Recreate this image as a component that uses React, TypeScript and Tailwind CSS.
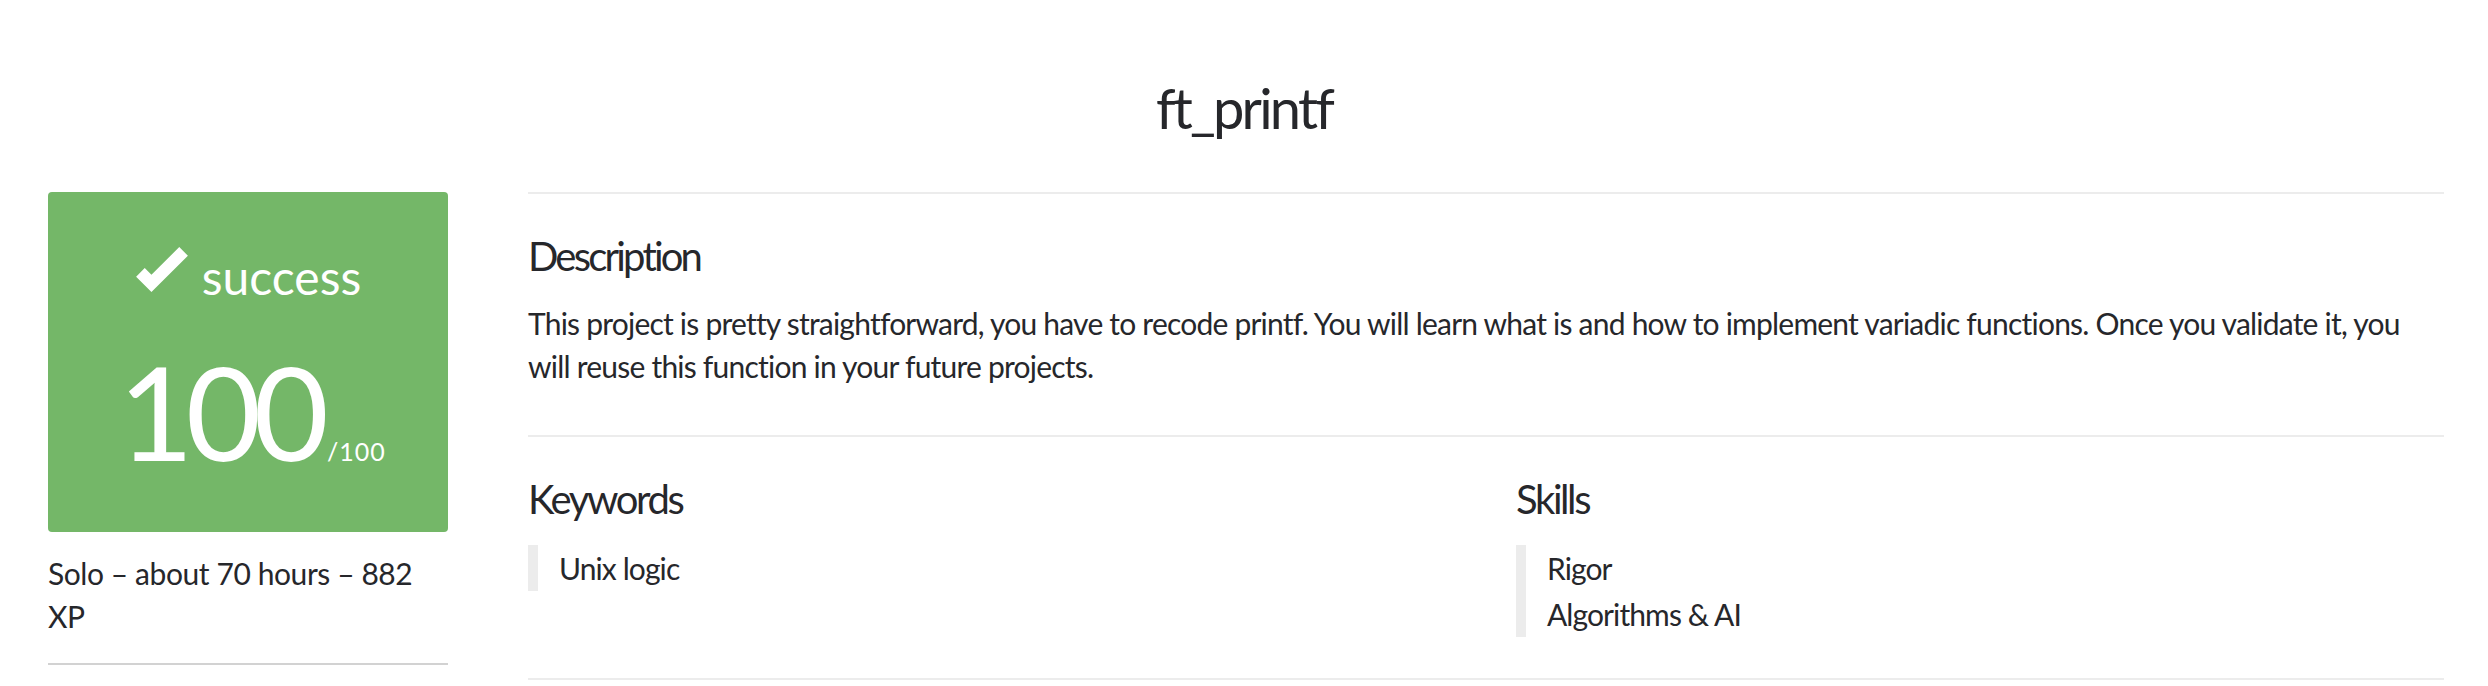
export default function App() {
  return (
    <div className="min-h-screen bg-white font-['Lato','Liberation_Sans',sans-serif] text-[#26272b]">
      {/* Project title */}
      <h1 className="h-[192px] pt-[80px] text-center text-[56px] leading-none tracking-[-0.05em]">ft_printf</h1>

      <div className="flex pl-[48px]">
        {/* Left: result card */}
        <div className="w-[400px] shrink-0">
          <div className="flex h-[340px] flex-col items-center rounded-[4px] bg-[#74b768] pt-[61px] text-white">
            <div className="flex h-[48px] items-center">
              <svg viewBox="0 -2 54 49" className="mb-[14px] mr-[13px] h-[47px] w-[54px]" fill="currentColor">
                <polygon points="0,29 9,20 16,27 45,-2 54,7 16,45" />
              </svg>
              <span className="text-[48px] leading-none">success</span>
            </div>
            <div className="mt-[45px] flex items-baseline pl-[8px]">
              <span className="text-[130px] leading-none tracking-[-0.06em]">100</span>
              <span className="ml-[6px] text-[25px] leading-none tracking-[0.04em]">/100</span>
            </div>
          </div>
          <p className="pr-[20px] pt-[20px] text-[30px] leading-[43px] tracking-[-0.014em]">
            Solo – about 70 hours – 882 XP
          </p>
          <div className="mt-[25px] border-t-2 border-[#d2d2d2]" />
        </div>

        {/* Right: project details */}
        <div className="ml-[80px] w-[1916px] shrink-0">
          <section className="border-t-2 border-[#ececec] pb-[47px] pt-[40px]">
            <h3 className="mb-[24px] text-[40px] leading-[44px] tracking-[-0.07em]">Description</h3>
            <p className="text-[30px] leading-[43px] tracking-[-0.026em]">
              This project is pretty straightforward, you have to recode printf. You will learn what is and how to
              implement variadic functions. Once you validate it, you will reuse this function in your future projects.
            </p>
          </section>

          <section className="border-y-2 border-[#ececec] pb-[41px] pt-[40px]">
            <div className="grid grid-cols-2 gap-[60px]">
              <div>
                <h3 className="mb-[24px] text-[40px] leading-[44px] tracking-[-0.06em]">Keywords</h3>
                <ul className="border-l-[10px] border-[#ececec] pl-[21px] text-[30px] leading-[46px] tracking-[-0.03em]">
                  <li>Unix logic</li>
                </ul>
              </div>
              <div>
                <h3 className="mb-[24px] text-[40px] leading-[44px] tracking-[-0.06em]">Skills</h3>
                <ul className="border-l-[10px] border-[#ececec] pl-[21px] text-[30px] leading-[46px] tracking-[-0.03em]">
                  <li>Rigor</li>
                  <li>Algorithms &amp; AI</li>
                </ul>
              </div>
            </div>
          </section>
        </div>
      </div>
    </div>
  );
}
